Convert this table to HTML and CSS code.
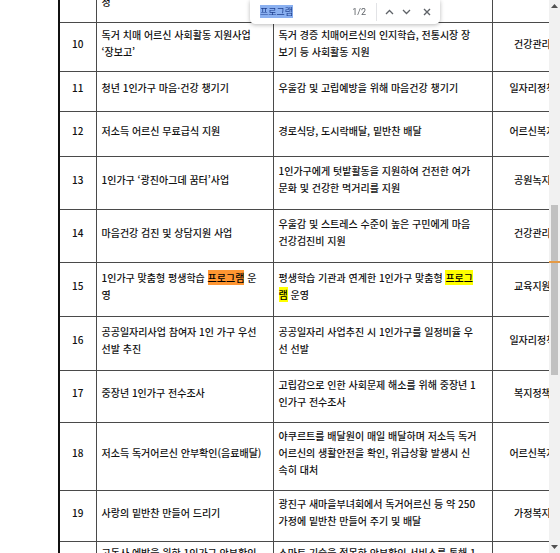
FILE: index.html
```html
<!DOCTYPE html>
<html lang="ko">
<head>
<meta charset="utf-8">
<title>1인가구 지원사업</title>
<link rel="stylesheet" href="styles.css">
</head>
<body>
<div class="page">
  <table class="doc">
    <colgroup><col class="c1"><col class="c2"><col class="c3"><col class="c4"></colgroup>
    <tbody>
      <tr class="h52"><td class="num"></td><td><br>정</td><td></td><td class="dept"></td></tr>
      <tr class="h49"><td class="num">10</td><td>독거 치매 어르신 사회활동 지원사업<br>‘장보고’</td><td>독거 경증 치매어르신의 인지학습, 전통시장 장<br>보기 등 사회활동 지원</td><td class="dept">건강관리과</td></tr>
      <tr class="h40"><td class="num">11</td><td>청년 1인가구 마음·건강 챙기기</td><td>우울감 및 고립예방을 위해 마음건강 챙기기</td><td class="dept">일자리정책과</td></tr>
      <tr class="h45"><td class="num">12</td><td>저소득 어르신 무료급식 지원</td><td>경로식당, 도시락배달, 밑반찬 배달</td><td class="dept">어르신복지과</td></tr>
      <tr class="h53"><td class="num">13</td><td>1인가구 ‘광진아그데 꿈터’사업</td><td>1인가구에게 텃밭활동을 지원하여 건전한 여가<br>문화 및 건강한 먹거리를 지원</td><td class="dept">공원녹지과</td></tr>
      <tr class="h53"><td class="num">14</td><td>마음건강 검진 및 상담지원 사업</td><td>우울감 및 스트레스 수준이 높은 구민에게 마음<br>건강검진비 지원</td><td class="dept">건강관리과</td></tr>
      <tr class="h54"><td class="num">15</td><td>1인가구 맞춤형 평생학습 <span class="hl-active">프로그램</span> 운<br>영</td><td>평생학습 기관과 연계한 1인가구 맞춤형 <span class="hl">프로그</span><br><span class="hl">램</span> 운영</td><td class="dept">교육지원과</td></tr>
      <tr class="h54"><td class="num">16</td><td>공공일자리사업 참여자 1인 가구 우선<br>선발 추진</td><td>공공일자리 사업추진 시 1인가구를 일정비율 우<br>선 선발</td><td class="dept">일자리정책과</td></tr>
      <tr class="h52"><td class="num">17</td><td>중장년 1인가구 전수조사</td><td>고립감으로 인한 사회문제 해소를 위해 중장년 1<br>인가구 전수조사</td><td class="dept">복지정책과</td></tr>
      <tr class="h68"><td class="num">18</td><td>저소득 독거어르신 안부확인(음료배달)</td><td>야쿠르트를 배달원이 매일 배달하며 저소득 독거<br>어르신의 생활안전을 확인, 위급상황 발생시 신<br>속히 대처</td><td class="dept">어르신복지과</td></tr>
      <tr class="h51"><td class="num">19</td><td>사랑의 밑반찬 만들어 드리기</td><td>광진구 새마을부녀회에서 독거어르신 등 약 250<br>가정에 밑반찬 만들어 주기 및 배달</td><td class="dept">가정복지과</td></tr>
      <tr class="h46"><td class="num">20</td><td>고독사 예방을 위한 1인가구 안부확인<br>서비스</td><td>스마트 기술을 접목한 안부확인 서비스를 통해 1<br>인가구 고독사 예방</td><td class="dept">복지정책과</td></tr>
    </tbody>
  </table>
</div>

<div class="findbar">
  <div class="query"><span class="sel">프로그램</span></div>
  <div class="count">1/2</div>
  <div class="divider"></div>
  <div class="fbtn">
    <svg width="9" height="6" viewBox="0 0 9 6"><path d="M1 5 L4.5 1.5 L8 5" fill="none" stroke="#5f6368" stroke-width="1.3"/></svg>
  </div>
  <div class="fbtn">
    <svg width="9" height="6" viewBox="0 0 9 6"><path d="M1 1 L4.5 4.5 L8 1" fill="none" stroke="#5f6368" stroke-width="1.3"/></svg>
  </div>
  <div class="fbtn close">
    <svg width="8" height="8" viewBox="0 0 8 8"><path d="M1 1 L7 7 M7 1 L1 7" fill="none" stroke="#5f6368" stroke-width="1.4"/></svg>
  </div>
</div>

<div class="sbar">
  <svg class="arr up" width="7" height="4" viewBox="0 0 7 4"><path d="M0 4 L3.5 0 L7 4 Z" fill="#505050"/></svg>
  <div class="thumb"></div>
  <div class="tick"></div>
  <svg class="arr down" width="7" height="4" viewBox="0 0 7 4"><path d="M0 0 L3.5 4 L7 0 Z" fill="#505050"/></svg>
</div>
</body>
</html>
```

FILE: styles.css
```css
html, body {
  margin: 0;
  padding: 0;
  height: 100%;
  overflow: hidden;
  background: #fff;
}
body {
  font-family: "Noto Sans CJK KR", "Noto Sans", sans-serif;
  font-size: 10px;
  font-weight: 500;
  color: #111;
}
.page {
  padding-left: 58px;
  margin-top: -30px;
  width: 620px;
}
table.doc {
  border-collapse: collapse;
  table-layout: fixed;
  width: 524px;
  border-left: 2px solid #111;
}
col.c1 { width: 37px; }
col.c2 { width: 177px; }
col.c3 { width: 219px; }
col.c4 { width: 90px; }
td {
  border: 1px solid #4a4a4a;
  padding: 2px 5px 10px 5px;
  vertical-align: middle;
  line-height: 17px;
  text-align: left;
  white-space: nowrap;
}
td.num, td.dept { text-align: center; }
tr.h40 { height: 40px; }
tr.h45 { height: 45px; }
tr.h46 { height: 46px; }
tr.h49 { height: 49px; }
tr.h51 { height: 51px; }
tr.h52 { height: 52px; }
tr.h53 { height: 53px; }
tr.h54 { height: 54px; }
tr.h68 { height: 68px; }
.hl-active { background: #ff9632; color: #000; }
.hl { background: #ffff00; color: #000; }

/* find bar */
.findbar {
  position: fixed;
  top: 0;
  left: 250px;
  width: 190px;
  height: 24px;
  box-sizing: border-box;
  background: #fff;
  border-radius: 0 0 5px 5px;
  box-shadow: 0 1px 4px rgba(0,0,0,0.28);
  display: flex;
  align-items: center;
  padding: 0 5px 0 10px;
  font-weight: 400;
}
.query { flex: 1; font-size: 9px; line-height: 12px; }
.sel { background: #8ab0f0; color: #1c3d8c; }
.count { font-size: 9px; color: #5f6368; margin-right: 10px; font-family: "Roboto", sans-serif; }
.divider { width: 1px; height: 18px; background: #e2e3e6; margin-right: 4px; }
.fbtn {
  width: 17px;
  height: 16px;
  display: flex;
  align-items: center;
  justify-content: center;
}
.fbtn.close { margin-left: 3px; }

/* scrollbar */
.sbar {
  position: fixed;
  top: 0;
  right: 0;
  width: 11px;
  height: 100%;
  background: #f1f1f1;
}
.arr { position: absolute; left: 2px; }
.arr.up { top: 4px; }
.arr.down { bottom: 4px; }
.thumb {
  position: absolute;
  left: 2px;
  width: 7px;
  top: 205px;
  height: 170px;
  background: #c1c1c1;
}
.tick {
  position: absolute;
  left: 0;
  right: 0;
  top: 261px;
  height: 2px;
  background: #e59a45;
}
```
